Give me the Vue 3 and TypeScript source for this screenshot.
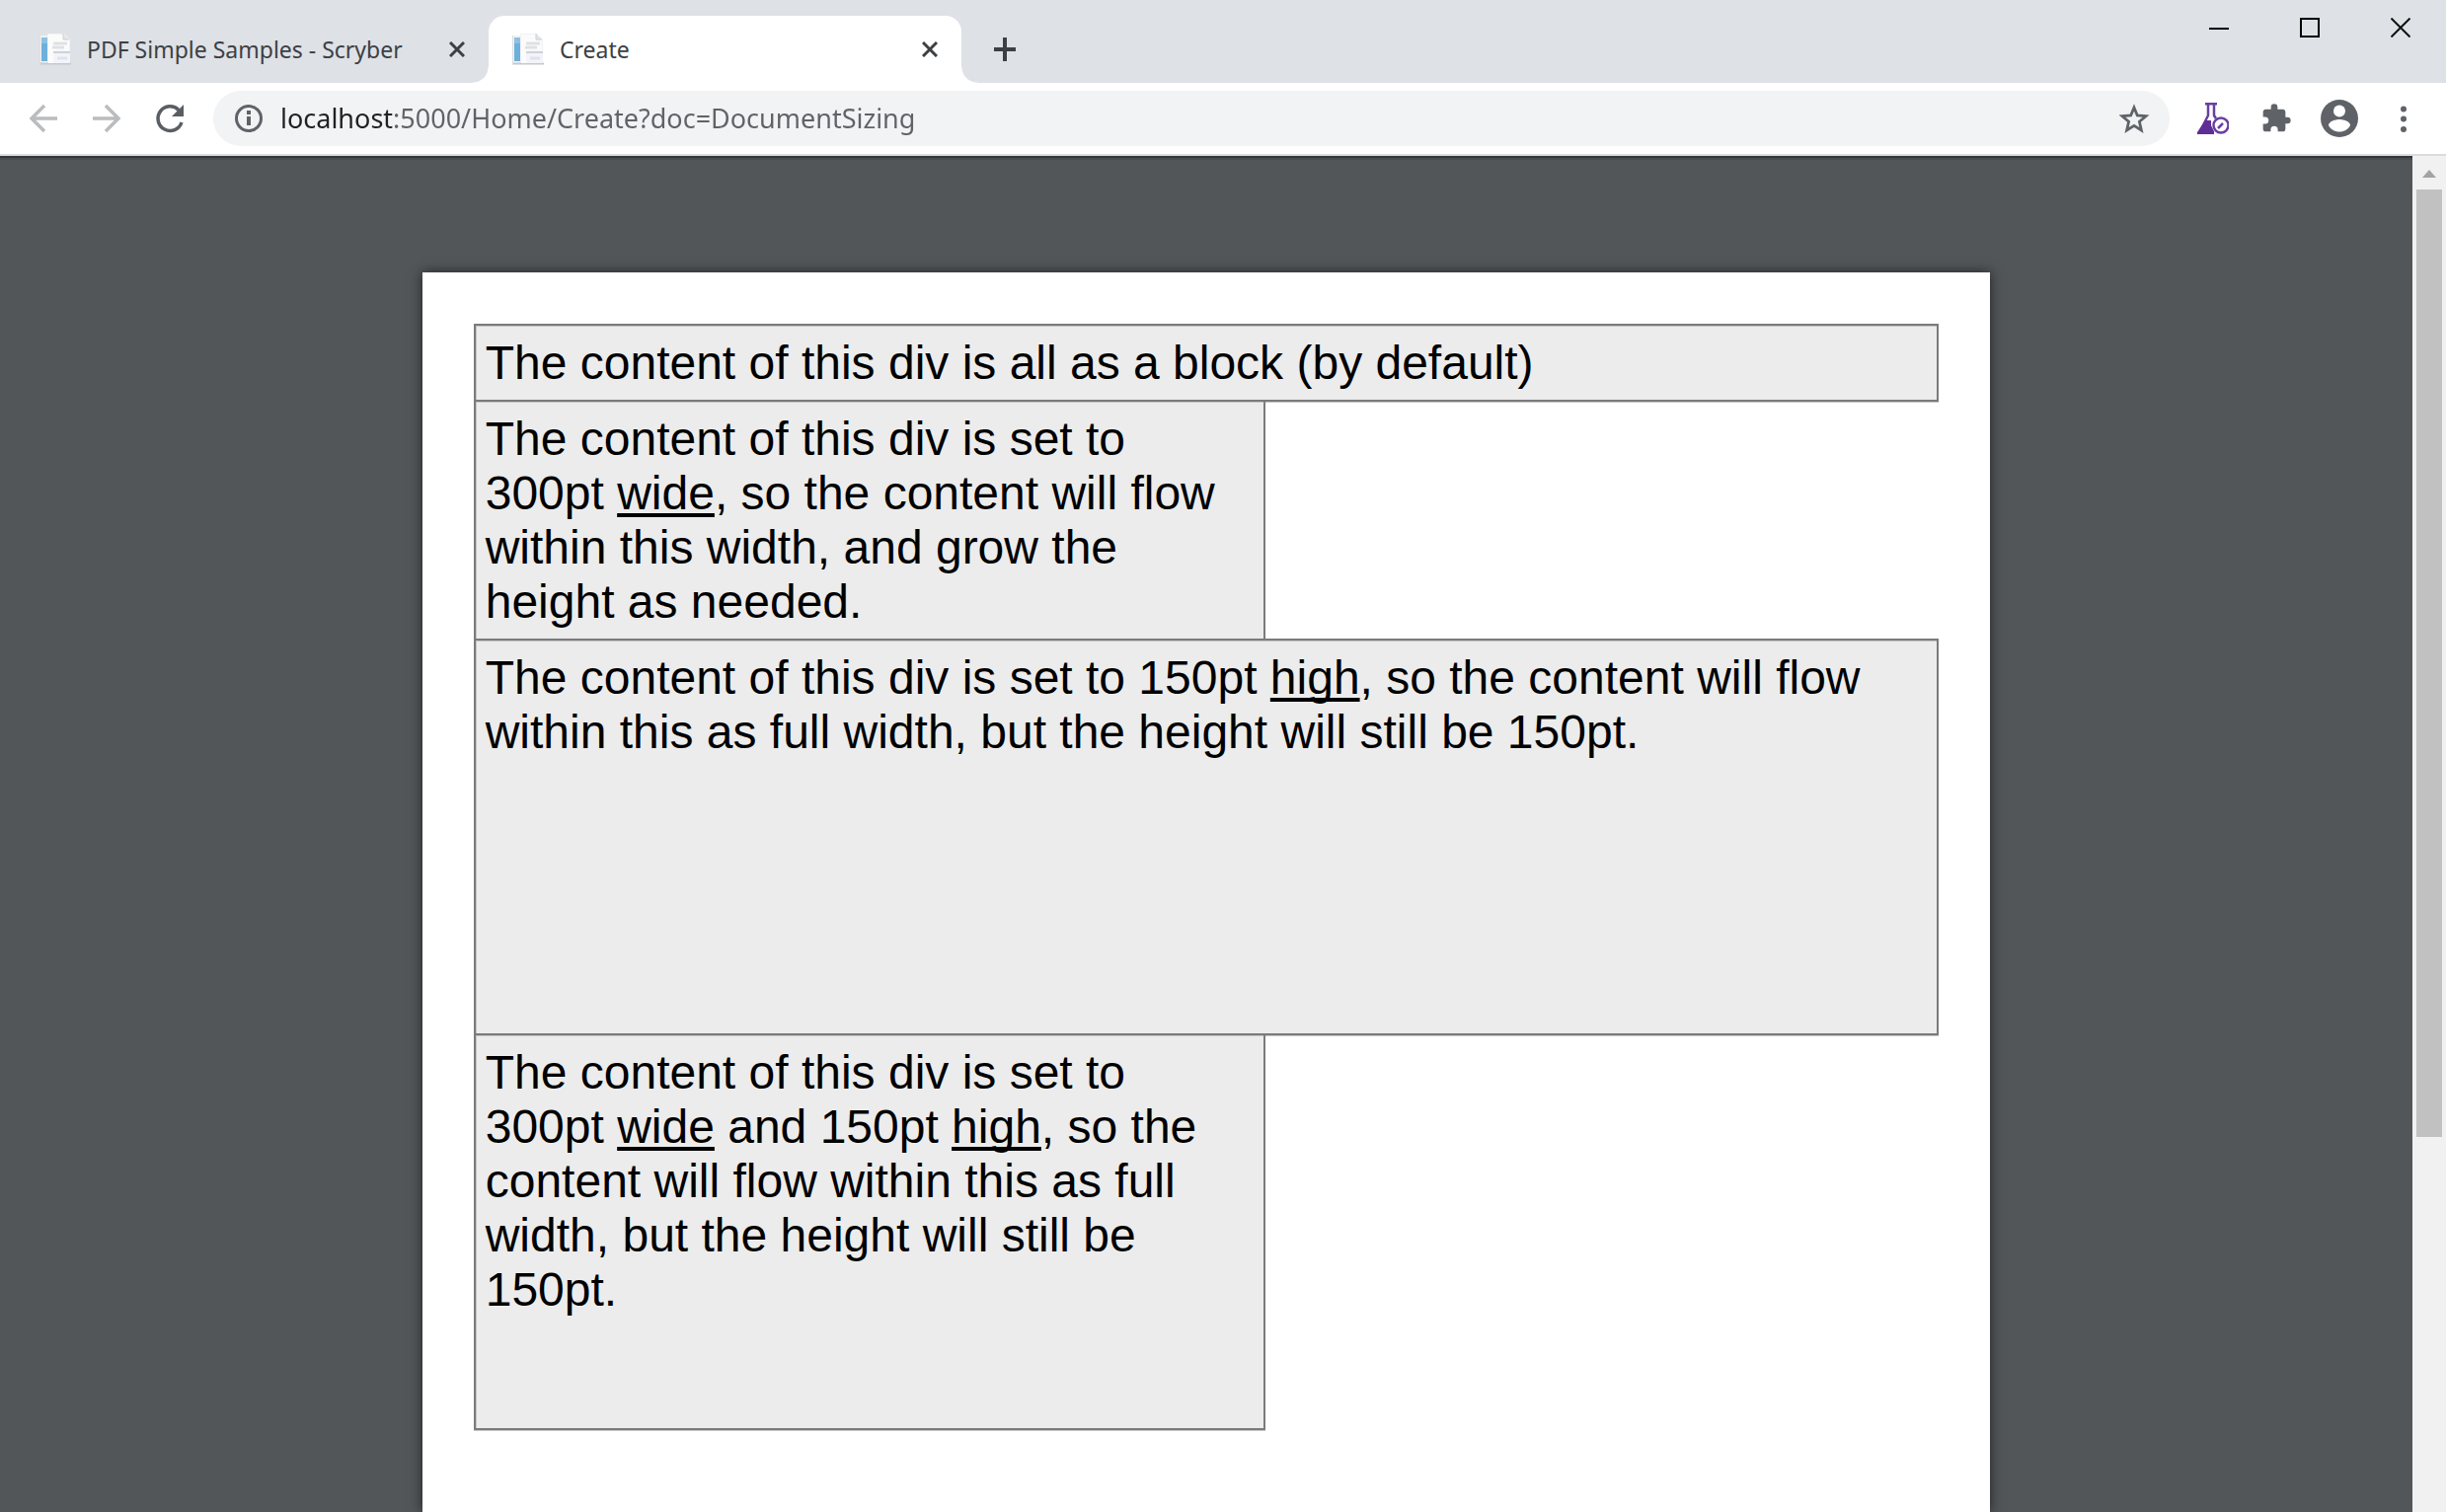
<script setup lang="ts">
import { ref } from 'vue'

interface Tab {
  id: number
  title: string
}

interface Run {
  text: string
  underline?: boolean
}

interface Block {
  kind: string
  runs: Run[]
}

const tabs: Tab[] = [
  { id: 1, title: 'PDF Simple Samples - Scryber' },
  { id: 2, title: 'Create' },
]
const activeTab = ref(2)
const address = ref('localhost:5000/Home/Create?doc=DocumentSizing')

const blocks: Block[] = [
  { kind: 'auto', runs: [{ text: 'The content of this div is all as a block (by default)' }] },
  {
    kind: 'wide',
    runs: [
      { text: 'The content of this div is set to 300pt ' },
      { text: 'wide', underline: true },
      { text: ', so the content will flow within this width, and grow the height as needed.' },
    ],
  },
  {
    kind: 'high',
    runs: [
      { text: 'The content of this div is set to 150pt ' },
      { text: 'high', underline: true },
      { text: ', so the content will flow within this as full width, but the height will still be 150pt.' },
    ],
  },
  {
    kind: 'wide high',
    runs: [
      { text: 'The content of this div is set to 300pt ' },
      { text: 'wide', underline: true },
      { text: ' and 150pt ' },
      { text: 'high', underline: true },
      { text: ', so the content will flow within this as full width, but the height will still be 150pt.' },
    ],
  },
]
</script>

<template>
  <div class="browser">
    <header class="tab-strip">
      <nav class="tabs" aria-label="Tabs">
        <div v-for="tab in tabs" :key="tab.id" class="tab" :class="{ active: tab.id === activeTab }">
          <button class="tab-label" type="button" @click="activeTab = tab.id">
            <svg class="favicon" viewBox="0 0 32 32" aria-hidden="true">
              <path d="M0 2h8V0h17l6 6v25H0z" fill="#f1f2f3" />
              <path d="M0 30.5h32" stroke="#c6c9cc" stroke-width="2" />
              <path d="M.5 2v29" stroke="#dcdee0" />
              <path d="M2 4h6v24H2z" fill="#6db0dc" />
              <path d="M2 4h6v6H2z" fill="#8cc1e4" />
              <path d="M9 1h15v6h6v23H9z" fill="#fbfbfc" />
              <path d="M24 0v6h6" fill="#e3e4e6" stroke="#cfd1d3" />
              <path d="M14 10h14M13 14h12" stroke="#dfe1e4" stroke-width="3" />
              <path d="M16 17h15v13H14v-9z" fill="#f3f4f9" />
              <path d="M14 19h17" stroke="#cfd2d6" stroke-width="2" />
              <path d="M18 25h10" stroke="#dfe2ef" stroke-width="3" />
            </svg>
            <span>{{ tab.title }}</span>
          </button>
          <button class="icon-button close" type="button" aria-label="Close tab">
            <svg viewBox="0 0 16 16" width="16" height="16" aria-hidden="true">
              <path d="M1 1l14 14M15 1L1 15" stroke="#3c4043" stroke-width="3" />
            </svg>
          </button>
        </div>
        <button class="icon-button new-tab" type="button" aria-label="New tab">
          <svg viewBox="0 0 24 24" width="24" height="24" aria-hidden="true">
            <path d="M12 0v24M1 12h22" stroke="#3c4043" stroke-width="4" />
          </svg>
        </button>
      </nav>
      <div class="window-controls">
        <button type="button" aria-label="Minimize">
          <svg viewBox="0 0 20 20" aria-hidden="true"><path d="M0 11h20" stroke="#000" stroke-width="2" /></svg>
        </button>
        <button type="button" aria-label="Maximize">
          <svg viewBox="0 0 20 20" aria-hidden="true"><path d="M1 1h18v18H1z" fill="none" stroke="#000" stroke-width="2" /></svg>
        </button>
        <button type="button" aria-label="Close">
          <svg viewBox="0 0 20 20" aria-hidden="true"><path d="M.5.5l19 19M19.5.5l-19 19" stroke="#111" stroke-width="2" /></svg>
        </button>
      </div>
    </header>

    <div class="toolbar">
      <div class="tools">
        <button class="icon-button" type="button" aria-label="Back">
          <svg viewBox="0 0 32 32" aria-hidden="true"><path d="M30 16H4M17 3L4 16l13 13" fill="none" stroke="#babcbe" stroke-width="3.5" /></svg>
        </button>
        <button class="icon-button" type="button" aria-label="Forward">
          <svg viewBox="0 0 32 32" aria-hidden="true"><path d="M2 16h26M15 3l13 13-13 13" fill="none" stroke="#babcbe" stroke-width="3.5" /></svg>
        </button>
        <button class="icon-button" type="button" aria-label="Reload">
          <svg viewBox="0 0 32 32" aria-hidden="true">
            <path d="M28 20a12.3 12.3 0 1 1-3-12.600" fill="none" stroke="#5a5e63" stroke-width="3.5" />
            <path d="M30 2v12H18z" fill="#5a5e63" />
          </svg>
        </button>
      </div>
      <form class="omnibox" @submit.prevent>
        <button class="icon-button" type="button" aria-label="Site information">
          <svg viewBox="0 0 32 32" aria-hidden="true">
            <circle cx="16" cy="16" r="12.500" fill="none" stroke="#5f6368" stroke-width="3" />
            <path d="M16 14v9M16 8v4" stroke="#5f6368" stroke-width="4" />
          </svg>
        </button>
        <input v-model="address" class="address" type="text" aria-label="Address" spellcheck="false" />
        <button class="icon-button" type="button" aria-label="Bookmark this page">
          <svg viewBox="0 0 32 32" aria-hidden="true">
            <path d="M16 5l3.300 8 8.700.7-6.600 5.600 2 8.700-7.400-4.600L8.600 28l2-8.700L4 13.700l8.700-.7z" fill="none" stroke="#5f6368" stroke-width="2.800" />
          </svg>
        </button>
      </form>
      <div class="tools">
        <button class="icon-button" type="button" aria-label="Experiments extension">
          <svg viewBox="0 0 32 32" aria-hidden="true">
            <path d="M8 1h12" stroke="#6a3fa0" stroke-width="3" />
            <path d="M11 1v12L3 29M17 1v12l2 3" fill="none" stroke="#6a3fa0" stroke-width="2.500" />
            <path d="M8 18h6v5l3 6v3H0v-2z" fill="#5f2d96" />
            <circle cx="24" cy="23" r="7.500" fill="#fff" stroke="#6a3fa0" stroke-width="2.500" />
            <path d="M21 26l5-5" stroke="#6a3fa0" stroke-width="2.500" />
          </svg>
        </button>
        <button class="icon-button" type="button" aria-label="Extensions">
          <svg viewBox="0 0 24 24" aria-hidden="true">
            <path d="M20.500 11H19V7c0-1.100-.9-2-2-2h-4V3.500a2.500 2.500 0 0 0-5 0V5H4c-1.100 0-2 .9-2 2v3.800h1.500a2.700 2.700 0 0 1 0 5.400H2V20c0 1.100.9 2 2 2h3.800v-1.500a2.700 2.700 0 0 1 5.400 0V22H17c1.100 0 2-.9 2-2v-4h1.500a2.500 2.500 0 0 0 0-5z" fill="#5f6368" />
          </svg>
        </button>
        <button class="icon-button profile" type="button" aria-label="Profile">
          <svg viewBox="0 0 40 40" aria-hidden="true">
            <circle cx="20" cy="20" r="19" fill="#5f6368" />
            <circle cx="20" cy="12.500" r="6" fill="#fff" />
            <path d="M9 27c0-4 7-6 11-6s11 2 11 6c-2 4-6 6.500-11 6.500S11 31 9 27z" fill="#fff" />
          </svg>
        </button>
        <button class="icon-button" type="button" aria-label="Menu">
          <svg viewBox="0 0 32 32" aria-hidden="true">
            <g fill="#5f6368"><circle cx="17" cy="6.500" r="3" /><circle cx="17" cy="16.500" r="3" /><circle cx="17" cy="27" r="3" /></g>
          </svg>
        </button>
      </div>
    </div>

    <main class="viewer">
      <div class="canvas">
        <article class="page">
          <div v-for="(block, i) in blocks" :key="i" class="block" :class="block.kind"><template v-for="(run, j) in block.runs" :key="j"><u v-if="run.underline">{{ run.text }}</u><template v-else>{{ run.text }}</template></template></div>
        </article>
      </div>
      <div class="scrollbar" aria-hidden="true">
        <div class="scroll-arrow">
          <svg viewBox="0 0 14 8" width="14" height="8"><path d="M0 8l7-8 7 8z" fill="#a3a3a3" /></svg>
        </div>
        <div class="scroll-thumb"></div>
        <div class="scroll-rest"></div>
      </div>
    </main>
  </div>
</template>

<style>
body {
  margin: 0;
}
</style>

<style scoped>
.browser {
  display: flex;
  flex-direction: column;
  height: 100vh;
  overflow: hidden;
  font-family: "Noto Sans", "Open Sans", sans-serif;
}

button {
  border: 0;
  margin: 0;
  padding: 0;
  background: none;
  color: inherit;
  font: inherit;
}

svg {
  display: block;
}

.tab-strip {
  display: flex;
  flex: none;
  justify-content: space-between;
  height: 84px;
  background: #dee1e6;
}

.tabs {
  display: flex;
  flex: 1;
  align-items: flex-end;
  min-width: 0;
  padding-left: 16px;
}

.tab {
  position: relative;
  display: flex;
  flex: 0 1 479px;
  align-items: center;
  box-sizing: border-box;
  height: 68px;
  padding: 0 24px;
  border-radius: 16px 16px 0 0;
}

.tab.active {
  background: #fff;
}

.tab.active::before,
.tab.active::after {
  content: "";
  position: absolute;
  bottom: 0;
  width: 16px;
  height: 16px;
}

.tab.active::before {
  right: 100%;
  background: radial-gradient(circle at 0 0, transparent 15px, #fff 16px);
}

.tab.active::after {
  left: 100%;
  background: radial-gradient(circle at 100% 0, transparent 15px, #fff 16px);
}

.tab-label {
  display: flex;
  flex: 1;
  align-items: center;
  gap: 16px;
  min-width: 0;
  color: #3c4043;
  font-size: 23px;
  line-height: 32px;
  white-space: nowrap;
}

.favicon {
  flex: none;
  width: 32px;
  height: 32px;
}

.icon-button {
  display: flex;
  flex: none;
  align-items: center;
  justify-content: center;
  width: 32px;
  height: 32px;
}

.icon-button.close {
  width: 16px;
}

.icon-button.new-tab {
  height: 68px;
  margin-left: 28px;
}

.window-controls {
  display: flex;
  flex: none;
}

.window-controls button {
  display: flex;
  align-items: center;
  justify-content: center;
  width: 92px;
  height: 56px;
}

.window-controls svg {
  width: 20px;
  height: 20px;
}

.toolbar {
  display: flex;
  flex: none;
  align-items: center;
  gap: 28px;
  height: 72px;
  padding: 0 28px;
  border-bottom: 2px solid #dadce0;
  background: #fff;
}

.tools {
  display: flex;
  flex: none;
  align-items: center;
  gap: 32px;
}

.tools svg,
.omnibox svg {
  width: 32px;
  height: 32px;
}

.tools .profile svg {
  flex: none;
  width: 40px;
  height: 40px;
}

.omnibox {
  display: flex;
  flex: 1;
  align-items: center;
  gap: 16px;
  height: 56px;
  min-width: 0;
  padding: 0 20px;
  border-radius: 28px;
  background: #f1f3f4;
}

.address {
  flex: 1;
  min-width: 0;
  height: 40px;
  padding: 0;
  border: 0;
  outline: 0;
  background: linear-gradient(90deg, #202124 115px, #5f6368 115px);
  -webkit-background-clip: text;
  background-clip: text;
  color: transparent;
  font-family: inherit;
  font-size: 27px;
  line-height: 40px;
}

.viewer {
  display: flex;
  flex: 1;
  min-height: 0;
  background: #525659;
}

.canvas {
  display: flex;
  flex: 1;
  justify-content: center;
  min-width: 0;
  padding-top: 118px;
  overflow: hidden;
  box-shadow: inset 0 2px 0 #33373a, inset 0 4px 0 #484c4f;
}

.page {
  box-sizing: border-box;
  width: 65%;
  padding: 52px;
  background: #fff;
  box-shadow: 0 0 12px rgba(0, 0, 0, 0.6);
  color: #000;
  font-family: "Liberation Sans", Arial, sans-serif;
  font-size: 48px;
  line-height: 55px;
}

.block {
  box-sizing: border-box;
  padding: 10px 14px 10px 10px;
  border: 2px solid #7b7b7b;
  background: #ececec;
  box-shadow: inset 1px 1px 0 #c6c6c6, 0 1px 0 #c6c6c6;
}

.block + .block {
  margin-top: -2px;
}

.wide {
  max-width: 100%;
  width: 802px;
}

.high {
  height: 402px;
}

.block u {
  text-decoration-skip-ink: none;
  text-decoration-thickness: 4px;
  text-underline-offset: 4px;
}

.scrollbar {
  display: flex;
  flex: none;
  flex-direction: column;
  box-sizing: border-box;
  width: 34px;
  padding: 0 4px;
  background: #f1f1f1;
}

.scroll-arrow {
  display: flex;
  flex: none;
  align-items: center;
  justify-content: center;
  box-sizing: border-box;
  height: 34px;
  padding-top: 2px;
}

.scroll-thumb {
  flex: 48;
  background: #c1c1c1;
}

.scroll-rest {
  flex: 19;
}
</style>
